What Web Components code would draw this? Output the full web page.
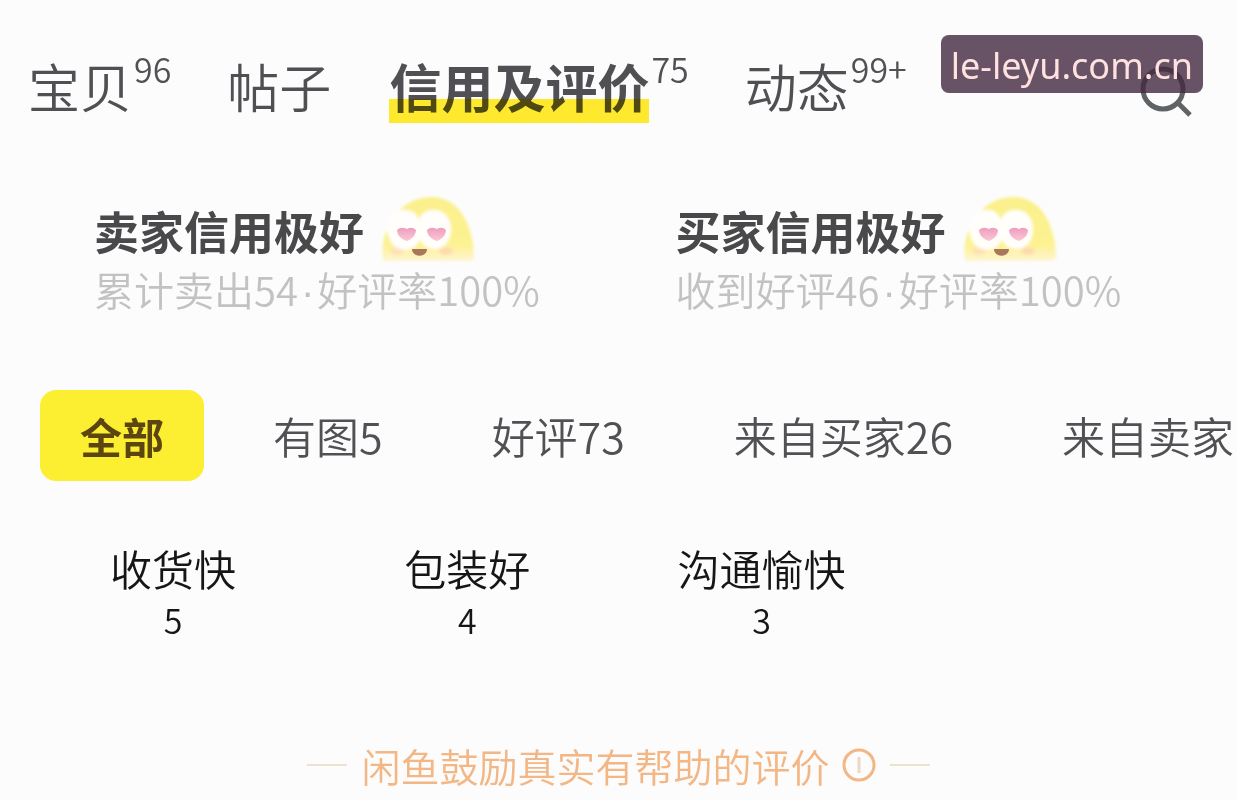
<!DOCTYPE html>
<html lang="zh-CN">
<head>
<meta charset="utf-8">
<meta name="viewport" content="width=device-width, initial-scale=1">
<title>信用及评价</title>
<style>
  body { margin: 0; background: #fcfcfc; color: #515155; font-family: "Noto Sans CJK SC", sans-serif; font-weight: 350; overflow-x: hidden; }
</style>
</head>
<body>
<review-page></review-page>
<script>
const define = (name, html) => {
  const template = document.createElement('template');
  template.innerHTML = html;
  customElements.define(name, class extends HTMLElement {
    constructor() {
      super();
      this.attachShadow({ mode: 'open' }).append(template.content.cloneNode(true));
    }
  });
};

define('profile-tab', `
  <style>
    :host { display: block; flex: none; }
    button { display: flex; align-items: flex-start; gap: 2px; padding: 0; border: 0; background: none; color: inherit; font: inherit; cursor: pointer; }
    .label { font-size: 52px; line-height: 74px; white-space: nowrap; }
    .label span { mix-blend-mode: multiply; }
    .count { font-size: 34px; line-height: 40px; }
    :host([active]) .label { font-weight: 700; background: linear-gradient(#ffe92e, #ffe92e) bottom / 100% 24px no-repeat; }
  </style>
  <button type="button"><span class="label"><span><slot></slot></span></span><span class="count"><slot name="count"></slot></span></button>`);

define('search-button', `
  <style>
    :host { display: block; flex: none; margin-left: auto; }
    button { display: block; padding: 0; border: 0; background: none; cursor: pointer; }
    svg { display: block; }
  </style>
  <button type="button" aria-label="搜索">
    <svg width="54" height="54" viewBox="0 0 54 54" fill="none" stroke="#606365" stroke-width="5">
      <circle cx="24" cy="25" r="20"/><path d="M38 38 51 51"/>
    </svg>
  </button>`);

define('site-badge', `
  <style>
    :host { display: block; position: absolute; top: 35px; right: 34px; padding: 4px 10px 0; border-radius: 8px; background: rgba(66, 39, 64, .8); color: #ffe1e0; font: 400 36px/54px "Noto Sans", sans-serif; white-space: nowrap; }
  </style>
  <slot></slot>`);

define('happy-face', `
  <style>
    :host { display: block; flex: none; }
    svg { display: block; }
  </style>
  <svg width="96" height="68" viewBox="0 0 96 68" aria-hidden="true">
    <defs>
      <linearGradient id="skin" x1="0" y1="0" x2="0" y2="1"><stop offset="0" stop-color="#fbf08c"/><stop offset=".75" stop-color="#fdf291"/><stop offset="1" stop-color="#fff4d4"/></linearGradient>
      <linearGradient id="heart" x1="0" y1="0" x2="0" y2="1"><stop offset="0" stop-color="#ee9dbb"/><stop offset="1" stop-color="#fbc8d9"/></linearGradient>
      <filter id="soft" x="-10%" y="-10%" width="120%" height="120%"><feGaussianBlur stdDeviation="1.4"/></filter>
      <filter id="edge" x="-10%" y="-10%" width="120%" height="120%"><feGaussianBlur stdDeviation="0.6"/></filter>
    </defs>
    <g filter="url(#soft)">
      <path d="M3 65C1 49 5 34 14 25 19 12 33 2 52 2c29 0 42 32 42 60 0 3-3 4-7 4H9c-3 0-6 1-6-1Z" fill="url(#skin)"/>
      <ellipse cx="17" cy="56" rx="7" ry="4" fill="#fde2b4"/><ellipse cx="66" cy="56" rx="7" ry="4" fill="#fddcab"/>
      <path d="M7 34C6 22 14 15 25 15c7 0 12 4 14 10 2-7 8-10 15-10 10 0 17 8 17 19 0 12-7 20-16 20-7 0-13-4-15-10-2 6-8 11-15 11C15 55 8 46 7 34Z" fill="#fffefb"/>
    </g>
    <g filter="url(#edge)">
      <path d="M17 35q4-4 10-1 5-3 9 1c0 5-4 9-9 11-6-2-10-6-10-11Z" fill="url(#heart)"/>
      <path d="M47 35q4-4 10-1 5-3 9 1c0 5-4 9-9 11-6-2-10-6-10-11Z" fill="url(#heart)"/>
      <path d="M32 54h15c0 9-15 9-15 0Z" fill="#a9785c"/>
    </g>
  </svg>`);

define('credit-card', `
  <style>
    :host { display: block; padding-left: 57px; }
    header { display: flex; align-items: flex-end; gap: 16px; height: 64px; }
    h2 { margin: 0; font-size: 45px; line-height: 64px; font-weight: 700; color: #49494b; white-space: nowrap; }
    p { margin: 0; font-size: 40px; line-height: 52px; color: #c2c2c2; white-space: nowrap; }
  </style>
  <header><h2><slot></slot></h2><happy-face></happy-face></header>
  <p><slot name="detail"></slot></p>`);

define('mid-dot', `
  <style>
    :host { display: inline-block; padding: 0 3px; font-family: "Liberation Sans", sans-serif; line-height: 1; }
  </style>
  <slot></slot>`);

define('filter-chip', `
  <style>
    :host { display: block; flex: none; }
    button { display: block; padding: 0 40px; border: 0; border-radius: 16px; background: none; color: inherit; font: inherit; font-size: 43px; line-height: 91px; white-space: nowrap; cursor: pointer; }
    :host([active]) button { background: #fcee30; color: #5c4610; font-size: 42px; font-weight: 700; }
  </style>
  <button type="button"><slot></slot></button>`);

define('review-tag', `
  <style>
    :host { display: grid; justify-items: center; color: #161616; }
    .name { font-size: 42px; line-height: 56px; }
    .count { font-size: 34px; line-height: 48px; }
  </style>
  <span class="name"><slot></slot></span><span class="count"><slot name="count"></slot></span>`);

define('page-note', `
  <style>
    :host { display: flex; align-items: center; justify-content: center; gap: 14px; color: #f3b685; }
    .rule { width: 40px; height: 2px; background: #ebe2cf; }
    p { display: flex; align-items: center; gap: 12px; margin: 0; font-size: 39px; line-height: 56px; white-space: nowrap; }
    button { padding: 0; border: 0; background: none; color: inherit; cursor: pointer; }
    svg { display: block; }
  </style>
  <span class="rule"></span>
  <p><slot></slot><button type="button" aria-label="说明">
    <svg width="34" height="34" viewBox="0 0 34 34" fill="none" stroke="currentColor">
      <circle cx="17" cy="17" r="15" stroke-width="3"/><path d="M17 9v16" stroke-width="3" stroke="#ecd9c4"/>
    </svg></button></p>
  <span class="rule"></span>`);

define('review-page', `
  <style>
    :host { display: block; position: relative; padding: 49px 0 6px; }
    nav { display: flex; align-items: flex-start; gap: 56px; padding: 0 44px 0 28px; }
    search-button { margin-top: 15px; }
    .credits { display: grid; grid-template-columns: 1fr 1fr; margin-top: 76px; padding: 0 37px; }
    .filters { display: flex; gap: 29px; margin-top: 75px; padding-left: 40px; overflow: hidden; }
    .tags { display: grid; grid-template-columns: repeat(4, 1fr); margin-top: 59px; padding: 0 34px 0 26px; }
    page-note { margin-top: 93px; }
  </style>
  <nav aria-label="主页栏目">
    <profile-tab>宝贝<span slot="count">96</span></profile-tab>
    <profile-tab>帖子</profile-tab>
    <profile-tab active>信用及评价<span slot="count">75</span></profile-tab>
    <profile-tab>动态<span slot="count">99+</span></profile-tab>
    <search-button></search-button>
  </nav>
  <section class="credits">
    <credit-card>卖家信用极好<span slot="detail">累计卖出54<mid-dot>·</mid-dot>好评率100%</span></credit-card>
    <credit-card>买家信用极好<span slot="detail">收到好评46<mid-dot>·</mid-dot>好评率100%</span></credit-card>
  </section>
  <div class="filters">
    <filter-chip active>全部</filter-chip>
    <filter-chip>有图5</filter-chip>
    <filter-chip>好评73</filter-chip>
    <filter-chip>来自买家26</filter-chip>
    <filter-chip>来自卖家</filter-chip>
  </div>
  <section class="tags">
    <review-tag>收货快<span slot="count">5</span></review-tag>
    <review-tag>包装好<span slot="count">4</span></review-tag>
    <review-tag>沟通愉快<span slot="count">3</span></review-tag>
  </section>
  <page-note>闲鱼鼓励真实有帮助的评价</page-note>
  <site-badge>le-leyu.com.cn</site-badge>`);
</script>
</body>
</html>
